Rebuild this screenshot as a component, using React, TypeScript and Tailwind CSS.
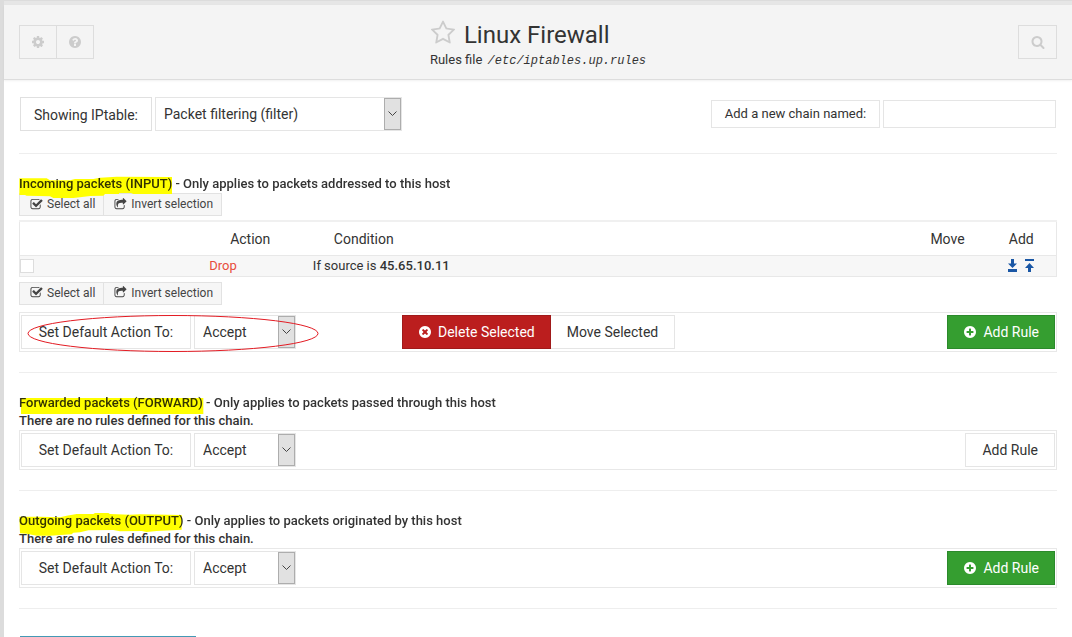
import { ReactNode } from "react";

const circle =
  "q0 209-103 385.5t-279.5 279.5-385.5 103-385.5-103-279.5-279.5-103-385.5 103-385.5 279.5-279.5 385.5-103 385.5 103 279.5 279.5 103 385.5z";

const icons = {
  cog: "M1152 896q0-106-75-181t-181-75-181 75-75 181 75 181 181 75 181-75 75-181zm512-109v222q0 12-8 23t-20 13l-185 28q-19 54-39 91 35 50 107 138 10 12 10 25t-9 23q-27 37-99 108t-94 71q-12 0-26-9l-138-108q-44 23-91 38-16 136-29 186-7 28-36 28h-222q-14 0-24.5-8.5t-11.5-21.5l-28-184q-49-16-90-37l-141 107q-10 9-25 9-14 0-25-11-126-114-165-168-7-10-7-23 0-12 8-23 15-21 51-66.5t54-70.5q-27-50-41-99l-183-27q-13-2-21-12.5t-8-23.5v-222q0-12 8-23t19-13l186-28q14-46 39-92-40-57-107-138-10-12-10-24 0-10 9-23 26-36 98.5-107.5t94.5-71.5q13 0 26 10l138 107q44-23 91-38 16-136 29-186 7-28 36-28h222q14 0 24.5 8.5t11.5 21.5l28 184q49 16 90 37l142-107q9-9 24-9 13 0 25 10 129 119 165 170 7 8 7 22 0 12-8 23-15 21-51 66.5t-54 70.5q26 50 41 98l183 28q13 2 21 12.5t8 23.5z",
  question:
    "M1024 1376v-192q0-14-9-23t-23-9h-192q-14 0-23 9t-9 23v192q0 14 9 23t23 9h192q14 0 23-9t9-23zm256-672q0-88-55.5-163t-138.5-116-170-41q-243 0-371 213-15 24 8 42l132 100q7 6 19 6 16 0 25-12 53-68 86-92 34-24 86-24 48 0 85.5 26t37.5 59q0 38-20 61t-68 45q-63 28-115.5 86.5t-52.5 125.5v36q0 14 9 23t23 9h192q14 0 23-9t9-23q0-19 21.5-49.5t54.5-49.5q32-18 49-28.5t46-35 44.5-48 28-60.5 12.5-81zm384 192" +
    circle,
  times:
    "M1277 1122q0-26-19-45l-181-181 181-181q19-19 19-45 0-27-19-46l-90-90q-19-19-46-19-26 0-45 19l-181 181-181-181q-19-19-45-19-27 0-46 19l-90 90q-19 19-19 46 0 26 19 45l181 181-181 181q-19 19-19 45 0 27 19 46l90 90q19 19 46 19 26 0 45-19l181-181 181 181q19 19 45 19 27 0 46-19l90-90q19-19 19-46zm387-226" +
    circle,
  plus:
    "M1344 960v-128q0-26-19-45t-45-19h-256v-256q0-26-19-45t-45-19h-128q-26 0-45 19t-19 45v256h-256q-26 0-45 19t-19 45v128q0 26 19 45t45 19h256v256q0 26 19 45t45 19h128q26 0 45-19t19-45v-256h256q26 0 45-19t19-45zm320-64" +
    circle,
  check:
    "M1472 930v318q0 119-84.5 203.5t-203.5 84.5h-832q-119 0-203.5-84.5t-84.5-203.5v-832q0-119 84.5-203.5t203.5-84.5h832q63 0 117 25 15 7 18 23 3 17-9 29l-49 49q-10 10-23 10-3 0-9-2-23-6-45-6h-832q-66 0-113 47t-47 113v832q0 66 47 113t113 47h832q66 0 113-47t47-113v-254q0-13 9-22l64-64q10-10 23-10 6 0 12 3 20 8 20 29zm231-489l-814 814q-24 24-57 24t-57-24l-430-430q-24-24-24-57t24-57l110-110q24-24 57-24t57 24l263 263 647-647q24-24 57-24t57 24l110 110q24 24 24 57t-24 57z",
  share:
    "M1472 989v259q0 119-84.5 203.5t-203.5 84.5h-832q-119 0-203.5-84.5t-84.5-203.5v-832q0-119 84.5-203.5t203.5-84.5h255q13 0 22.5 9.5t9.5 22.5q0 27-26 32-77 26-133 60-10 4-16 4h-112q-66 0-113 47t-47 113v832q0 66 47 113t113 47h832q66 0 113-47t47-113v-214q0-19 18-29 28-13 54-37 16-16 35-8 21 9 21 29zm237-496l-384 384q-18 19-45 19-12 0-25-5-39-17-39-59v-192h-160q-323 0-438 131-119 137-74 473 3 23-20 34-8 2-12 2-16 0-26-13-10-14-21-31t-39.5-68.5-49.5-99.5-38.5-114-17.5-122q0-49 3.5-91t14-90 28-88 47-81.5 68.5-74 94.5-61.5 124.5-48.5 159.5-30.5 196.5-11h160v-192q0-42 39-59 13-5 25-5 26 0 45 19l384 384q19 19 19 45t-19 45z",
  search:
    "M1216 832q0-185-131.5-316.5t-316.5-131.5-316.5 131.5-131.5 316.5 131.5 316.5 316.5 131.5 316.5-131.5 131.5-316.5zm512 832q0 52-38 90t-90 38q-54 0-90-38l-343-342q-179 124-399 124-143 0-273.5-55.5t-225-150-150-225-55.5-273.5 55.5-273.5 150-225 225-150 273.5-55.5 273.5 55.5 225 150 150 225 55.5 273.5q0 220-124 399l343 343q37 37 37 90z",
  star: "M1201 1004l306-297-422-62-189-382-189 382-422 62 306 297-73 421 378-199 377 199zm527-357q0 22-26 48l-363 354 86 500q1 7 1 20 0 50-41 50-19 0-40-12l-449-236-449 236q-22 12-40 12-21 0-31.5-14.5t-10.5-35.5q0-6 2-20l86-500-364-354q-25-27-25-48 0-37 56-46l502-73 225-455q19-41 49-41t49 41l225 455 502 73q56 9 56 46z",
};

const Icon = ({
  name,
  className = "size-3.5",
}: {
  name: keyof typeof icons;
  className?: string;
}) => (
  <svg
    viewBox="0 0 1792 1792"
    fill="currentColor"
    aria-hidden="true"
    className={`shrink-0 ${className}`}
  >
    <path d={icons[name]} />
  </svg>
);

const Select = ({
  id,
  className,
  children,
}: {
  id: string;
  className: string;
  children: ReactNode;
}) => (
  <div className={`relative h-[34px] border border-[#e5e5e5] bg-white ${className}`}>
    <select
      id={id}
      className="block h-full w-full appearance-none bg-transparent pl-2 pr-5 text-sm outline-none"
    >
      {children}
    </select>
    <span className="pointer-events-none absolute inset-y-0 right-0 flex w-[17px] items-center justify-center border border-[#adadad] bg-[#e1e1e1]">
      <svg width="9" height="6" viewBox="0 0 9 6" fill="none" stroke="#444">
        <path d="M0.5 0.5L4.5 4.5L8.5 0.5" />
      </svg>
    </span>
  </div>
);

// marker strokes behind the chain names
const markers = {
  INPUT:
    "M1 10H83L93 16H153L168 12H223L243 8L293 5L459 6V57H343L336 54H300V57H258L253 62L213 63L183 67L163 69H103L93 64L23 62L18 60H1Z",
  FORWARD: "M6 12H553V60H6Z",
  OUTPUT:
    "M1 14H63L123 16L143 11L173 6H223L228 3H268L273 6L333 8L363 7L488 9V53L413 57L383 60L368 57L303 58L283 54L208 55L183 61L163 62L158 67L93 71H53L23 65L3 64Z",
};

const ChainTitle = ({
  chain,
  title,
  text,
}: {
  chain: keyof typeof markers;
  title: string;
  text: string;
}) => (
  <h2 className="relative z-10 text-[13px] font-medium leading-[18px]">
    <svg
      width="190"
      height="24"
      viewBox="0 0 570 72"
      aria-hidden="true"
      className="pointer-events-none absolute left-0 top-0 mix-blend-multiply"
    >
      <path d={markers[chain]} fill="#ffff00" />
    </svg>
    {title} ({chain}) - {text}
  </h2>
);

const SelectLinks = () => (
  <div className="flex text-xs text-[#444]">
    <button
      type="button"
      className="flex h-[23px] items-center gap-1 border border-[#e2e2e2] bg-[#f6f6f6] pl-2.5 pr-2 pb-px"
    >
      <Icon name="check" className="size-[13px]" />
      Select all
    </button>
    <button
      type="button"
      className="-ml-px flex h-[23px] items-center gap-1 border border-[#e2e2e2] bg-[#f6f6f6] pl-2.5 pr-2 pb-px"
    >
      <Icon name="share" className="size-[13px]" />
      Invert selection
    </button>
  </div>
);

const AddRule = ({ primary }: { primary?: boolean }) =>
  primary ? (
    <button
      type="button"
      className="flex h-[34px] items-center gap-1.5 border border-[#2b8a2b] bg-[#359e30] px-[15px] pt-px text-sm text-white"
    >
      <Icon name="plus" />
      Add Rule
    </button>
  ) : (
    <button
      type="button"
      className="flex h-[34px] items-center border border-[#e5e5e5] bg-white px-4 pt-px text-sm"
    >
      Add Rule
    </button>
  );

const ChainForm = ({
  id,
  primary,
  circled,
  children,
}: {
  id: string;
  primary?: boolean;
  circled?: boolean;
  children?: ReactNode;
}) => (
  <div className="relative flex border border-[#e8e8e8] px-px py-0.5">
    <div className="flex w-[381px] gap-[3px]">
      <label
        htmlFor={id}
        className="flex h-[34px] w-[170px] items-center justify-center border border-[#e5e5e5] pt-px text-sm"
      >
        Set Default Action To:
      </label>
      <Select id={id} className="w-[102px]">
        <option>Accept</option>
        <option>Drop</option>
      </Select>
    </div>
    <div className="flex flex-1">{children}</div>
    <AddRule primary={primary} />
    {circled && (
      <svg
        width="292"
        height="38"
        viewBox="0 0 292 38"
        fill="none"
        stroke="#e31b23"
        aria-hidden="true"
        className="pointer-events-none absolute left-[7px] top-0.5"
      >
        <ellipse cx="146" cy="18.5" rx="145" ry="18" />
      </svg>
    )}
  </div>
);

const Divider = () => <hr className="mt-5 mb-[21px] border-[#eeeeee]" />;

const Arrow = ({ up }: { up?: boolean }) => (
  <svg width="9" height="13" viewBox="0 0 9 13" fill="#1a57a5" aria-hidden="true">
    {up ? (
      <path d="M0 0H9V2H0ZM4.5 4L9 9H6V13H3V9H0Z" />
    ) : (
      <path d="M0 10H9V13H0ZM4.5 9L0 4.5H3V0H6V4.5H9Z" />
    )}
  </svg>
);

const App = () => {
  return (
    <div className="min-h-screen border-l-4 border-[#dcdcdc] bg-white font-[Roboto,sans-serif] text-[#333]">
      <div className="h-[5px] border-t border-[#dcdcdc] bg-[#e6e6e6]"></div>
      <header className="grid h-[75px] grid-cols-[1fr_auto_1fr] items-start border-b border-[#dddddd] bg-[#f4f4f4] px-[15px] shadow-[0_1px_2px_rgba(0,0,0,0.06)]">
        <div className="mt-5 flex text-[#cccccc]">
          <button
            type="button"
            aria-label="Module config"
            className="flex h-[34px] w-[38px] items-center justify-center border border-[#dddddd]"
          >
            <Icon name="cog" />
          </button>
          <button
            type="button"
            aria-label="Help"
            className="-ml-px flex h-[34px] w-[38px] items-center justify-center border border-[#dddddd]"
          >
            <Icon name="question" />
          </button>
        </div>
        <div className="mt-3.5">
          <h1 className="flex items-center gap-2 text-2xl leading-8">
            <Icon name="star" className="mb-1 size-[26px] text-[#cccccc]" />
            Linux Firewall
          </h1>
          <p className="text-[13px] leading-[18px]">
            Rules file{" "}
            <span className="ml-0.5 font-['Liberation_Mono',monospace] text-xs italic">
              /etc/iptables.up.rules
            </span>
          </p>
        </div>
        <button
          type="button"
          aria-label="Search"
          className="mt-5 flex h-[34px] w-[39px] items-center justify-center justify-self-end border border-[#dddddd] text-[#cccccc]"
        >
          <Icon name="search" />
        </button>
      </header>

      <main className="px-[15px] pt-[17px]">
        <div className="flex items-center justify-between px-px">
          <div className="flex gap-[3px]">
            <label
              htmlFor="table"
              className="flex h-[34px] w-[132px] items-center justify-center border border-[#e0e0e0] pt-px text-sm"
            >
              Showing IPtable:
            </label>
            <Select id="table" className="w-[247px]">
              <option>Packet filtering (filter)</option>
              <option>Packet alteration (mangle)</option>
            </Select>
          </div>
          <div className="flex gap-[3px]">
            <label
              htmlFor="chain"
              className="flex h-7 w-[169px] items-center justify-center border border-[#e5e5e5] text-[13px]"
            >
              Add a new chain named:
            </label>
            <input
              id="chain"
              type="text"
              className="h-7 w-[173px] border border-[#e5e5e5] px-2 text-[13px] outline-none"
            />
          </div>
        </div>

        <hr className="mt-[22px] mb-[21px] border-[#eeeeee]" />

        <section>
          <ChainTitle
            chain="INPUT"
            title="Incoming packets"
            text="Only applies to packets addressed to this host"
          />
          <SelectLinks />
          <table className="mt-1 mb-[5px] w-full table-fixed border border-t-2 border-[#e8e8e8] border-t-[#f0f0f0]">
            <thead>
              <tr className="h-[34px] text-left text-sm">
                <th className="w-[18%]"></th>
                <th className="w-[10%] pt-0.5 pl-6 font-normal">Action</th>
                <th className="pt-0.5 pl-6 font-normal">Condition</th>
                <th className="w-[78px] pt-0.5 text-center font-normal">Move</th>
                <th className="w-[70px] pt-0.5 text-center font-normal">Add</th>
              </tr>
            </thead>
            <tbody>
              <tr className="h-[21px] border-t border-[#e8e8e8] bg-[#f7f7f7] text-[13px] leading-5">
                <td>
                  <input
                    type="checkbox"
                    aria-label="Select rule"
                    className="block size-3.5 appearance-none border border-[#dddddd] bg-white"
                  />
                </td>
                <td className="pl-[3px] text-[#e74c3c]">Drop</td>
                <td className="pl-[3px]">
                  If source is <b className="font-medium">45.65.10.11</b>
                </td>
                <td></td>
                <td>
                  <div className="flex justify-center gap-2">
                    <a href="#after" aria-label="Add rule after">
                      <Arrow />
                    </a>
                    <a href="#before" aria-label="Add rule before">
                      <Arrow up />
                    </a>
                  </div>
                </td>
              </tr>
            </tbody>
          </table>
          <SelectLinks />
          <div className="mt-[7px]">
            <ChainForm id="input-action" primary circled>
              <button
                type="button"
                className="flex h-[34px] items-center gap-1.5 border border-[#a01a1a] bg-[#bb1e1e] px-[15px] pt-px text-sm text-white"
              >
                <Icon name="times" />
                Delete Selected
              </button>
              <button
                type="button"
                className="flex h-[34px] items-center border border-l-0 border-[#e5e5e5] px-4 pt-px text-sm"
              >
                Move Selected
              </button>
            </ChainForm>
          </div>
        </section>

        <Divider />

        <section>
          <ChainTitle
            chain="FORWARD"
            title="Forwarded packets"
            text="Only applies to packets passed through this host"
          />
          <p className="text-[13px] font-medium leading-[18px]">
            There are no rules defined for this chain.
          </p>
          <ChainForm id="forward-action" />
        </section>

        <Divider />

        <section>
          <ChainTitle
            chain="OUTPUT"
            title="Outgoing packets"
            text="Only applies to packets originated by this host"
          />
          <p className="text-[13px] font-medium leading-[18px]">
            There are no rules defined for this chain.
          </p>
          <ChainForm id="output-action" primary />
        </section>

        <hr className="mt-5 mb-[27px] border-[#eeeeee]" />
        <div className="ml-px h-px w-44 bg-[#4499b5]"></div>
      </main>
    </div>
  );
};
export default App;
